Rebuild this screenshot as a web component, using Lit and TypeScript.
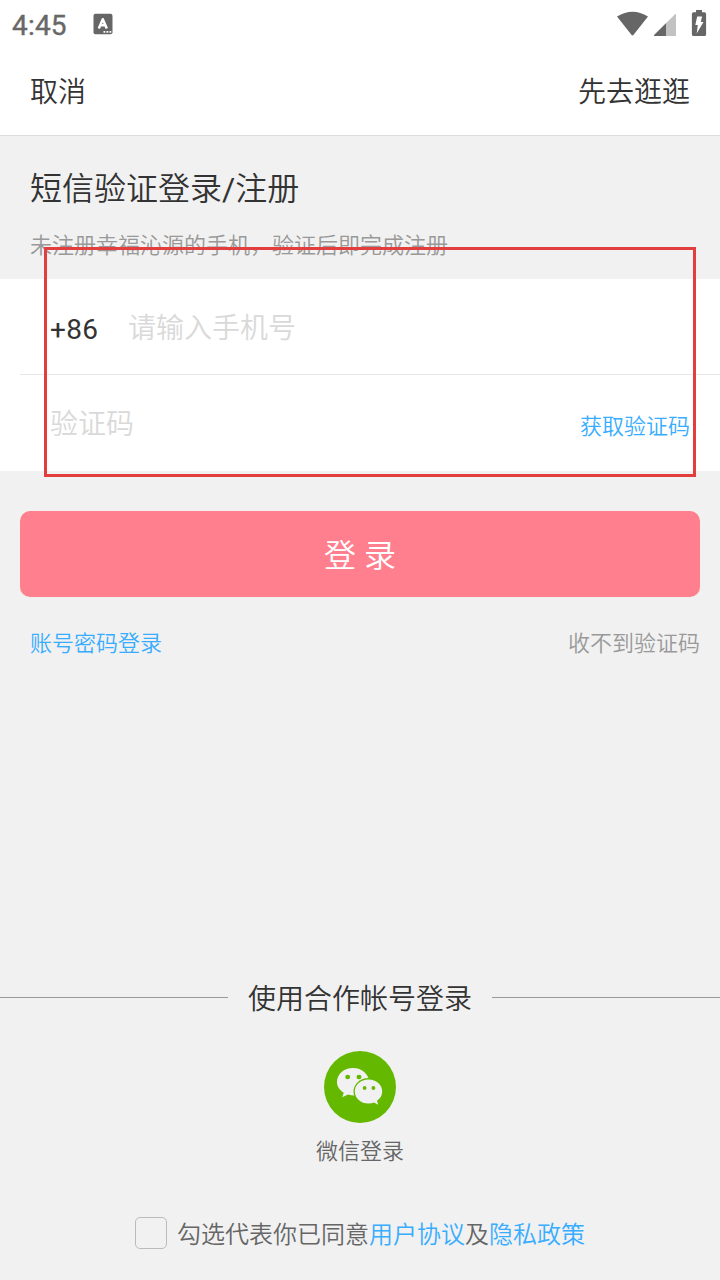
import { LitElement, html, css } from "lit";
import { customElement } from "lit/decorators.js";

@customElement("status-bar")
class StatusBar extends LitElement {
  static styles = css`
    :host { display: flex; height: 48px; align-items: flex-start; justify-content: space-between; }
    .left { display: flex; }
    .time { margin-left: 12px; width: 81px; font: 400 28px/51px Roboto, sans-serif; color: #686868; -webkit-text-stroke: 0.4px #686868; letter-spacing: 0.2px; }
    svg { display: block; }
    .left svg { margin-top: 13px; }
  `;
  render() {
    return html`
      <div class="left">
        <span class="time">4:45</span>
        <svg width="20" height="22" viewBox="0 0 20 22">
          <rect x="0.5" y="0.7" width="19" height="20.6" rx="2" fill="#666" />
          <path d="M5.8 15.5 9.8 6.2 13.8 15.5M7.3 12.3h5" fill="none" stroke="#fff" stroke-width="2.5" stroke-linejoin="round" />
          <path d="M10.5 18h1.8v1.8h-1.8zM13.5 18h1.8v1.8h-1.8zM16.5 18h1.8v1.8h-1.8z" fill="#fff" />
        </svg>
      </div>
      <svg width="104" height="48" viewBox="616 0 104 48">
        <path d="M617 16.6Q632.5 6.8 648 16.6L633.6 34.7Q632.5 36.2 631.4 34.7Z" fill="#666" />
        <path d="M675 14.2Q676 13.4 676 14.6V36H655Q653.2 36 654.4 34.8Z" fill="#c2c2c2" />
        <path d="M666 23.2V36H655Q653.2 36 654.4 34.8Z" fill="#666" />
        <path d="M696 10h6v2.3h2.5q1.6 0 1.6 1.6v20.5q0 1.6-1.6 1.6h-11q-1.6 0-1.6-1.6V13.9q0-1.6 1.6-1.6h2.5z" fill="#666" />
        <path d="M697.2 16.5h4.9l-1.3 5.4h2.7l-6.8 11.6 1.1-8.4h-2.5z" fill="#fff" />
      </svg>
    `;
  }
}

@customElement("wechat-icon")
class WechatIcon extends LitElement {
  static styles = css`
    :host, svg { display: block; }
  `;
  render() {
    return html`
      <svg width="72" height="72" viewBox="0 0 72 72">
        <circle cx="36" cy="36" r="36" fill="#64b900" />
        <path d="M29 17C20 17 13 23 13 31C13 35.6 15.5 39 19.8 41.8L18.2 46.2L24 43.5Q28 44.8 33 44.3L46 33C45 23 38 17 29 17Z" fill="#f1f1f1" />
        <ellipse cx="44.5" cy="40.5" rx="15" ry="13.5" fill="#64b900" />
        <path d="M44.5 28.5C36.8 28.5 30.8 33.8 30.8 40.5C30.8 47.2 36.8 52.6 44.5 52.6Q47.5 52.6 50 51.5L54.2 53.8L53 49.8C56.4 47.4 58.2 44.3 58.2 40.5C58.2 33.8 52.2 28.5 44.5 28.5Z" fill="#f1f1f1" />
        <g fill="#64b900">
          <ellipse cx="23.7" cy="26" rx="2.5" ry="2.2" />
          <ellipse cx="35" cy="26" rx="2.5" ry="2.2" />
          <circle cx="40.6" cy="37" r="1.9" />
          <circle cx="49.4" cy="37" r="1.9" />
        </g>
      </svg>
    `;
  }
}

@customElement("app-root")
class AppRoot extends LitElement {
  static styles = css`
    :host {
      display: flex; flex-direction: column; position: relative;
      height: 1280px; width: 720px; overflow: hidden; box-sizing: border-box;
      background: #f1f1f1; color: #333; font-weight: 350;
      font-family: "Noto Sans CJK SC", sans-serif; white-space: nowrap;
    }
    .top { background: #fff; border-bottom: 1px solid #ddd; height: 135px; }
    .nav { display: flex; justify-content: space-between; padding: 0 30px; font-size: 28px; line-height: 84px; }
    .intro { height: 143px; padding: 0 30px; box-sizing: border-box; }
    .title { font-size: 32px; line-height: 46px; padding-top: 27px; }
    .slash { font-family: Roboto, sans-serif; font-weight: 400; line-height: 1; }
    .sub { font-size: 22px; line-height: 32px; padding-top: 18px; color: #999; }
    .form { background: #fff; height: 192px; }
    .row { display: flex; height: 95px; margin-left: 20px; padding: 0 30px; font-size: 28px; line-height: 95px; }
    .row.first { border-bottom: 1px solid #e8e8e8; }
    .row.second { justify-content: space-between; }
    .code { font-family: Roboto, sans-serif; font-weight: 400; width: 78px; line-height: 102px; letter-spacing: 0.3px; }
    .hint { color: #d9d9d9; }
    .get { color: #38adff; font-size: 22px; line-height: 99px; }
    .submit {
      margin: 40px 20px 0; height: 86px; border-radius: 10px; background: #ff7f8f;
      color: #fff; text-align: center; font-size: 32px; line-height: 84px; word-spacing: 1px;
    }
    .links { display: flex; justify-content: space-between; padding: 0 20px 0 30px; margin-top: 24px; font-size: 22px; line-height: 40px; color: #999; }
    .blue { color: #38adff; }
    .partner { display: flex; align-items: center; gap: 20px; margin-top: auto; font-size: 28px; line-height: 40px; }
    .rule { flex: 1; height: 1px; background: #999; }
    .wechat { display: flex; flex-direction: column; align-items: center; margin-top: 34px; font-size: 22px; line-height: 32px; color: #666; }
    .wechat span { margin-top: 10px; }
    .agree { display: flex; justify-content: center; margin: 52px 0 31px; height: 32px; font-size: 24px; line-height: 32px; color: #666; }
    .box { box-sizing: border-box; width: 32px; height: 32px; border: 1px solid #bbb; border-radius: 5px; margin-right: 10px; }
    .mark { position: absolute; left: 44px; top: 247px; width: 652.4px; height: 230px; box-sizing: border-box; border: 3px solid #e23e3e; }
  `;
  render() {
    return html`
      <div class="top">
        <status-bar></status-bar>
        <div class="nav"><span>取消</span><span>先去逛逛</span></div>
      </div>
      <div class="intro">
        <div class="title">短信验证登录<span class="slash">/</span>注册</div>
        <div class="sub">未注册幸福沁源的手机，验证后即完成注册</div>
      </div>
      <div class="form">
        <div class="row first"><span class="code">+86</span><span class="hint">请输入手机号</span></div>
        <div class="row second"><span class="hint">验证码</span><span class="get">获取验证码</span></div>
      </div>
      <div class="submit">登 录</div>
      <div class="links"><span class="blue">账号密码登录</span><span>收不到验证码</span></div>
      <div class="partner"><i class="rule"></i><span>使用合作帐号登录</span><i class="rule"></i></div>
      <div class="wechat"><wechat-icon></wechat-icon><span>微信登录</span></div>
      <div class="agree"><i class="box"></i><span>勾选代表你已同意<span class="blue">用户协议</span>及<span class="blue">隐私政策</span></span></div>
      <div class="mark"></div>
    `;
  }
}
